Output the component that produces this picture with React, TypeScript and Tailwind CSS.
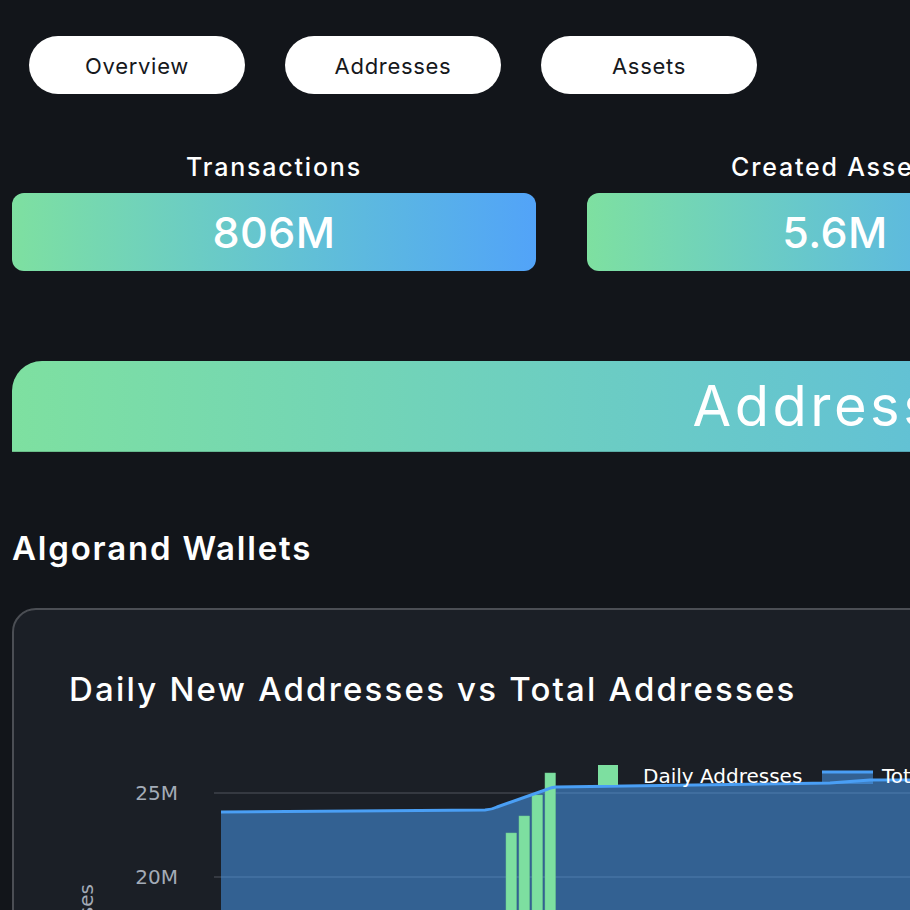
import React from "react";

const tabs = ["Overview", "Addresses", "Assets"];

const stats = [
  { label: "Transactions", value: "806M", w: "w-[524px]" },
  { label: "Created Assets", value: "5.6M", w: "w-[496px]" },
  { label: "Accounts", value: "31M", w: "w-[524px]" },
];

// offsets: page coords minus svg origin (14, 720)
const ox = 14;
const oy = 720;
const p = (x: number, y: number) => `${x - ox},${y - oy}`;

const bars = [
  { x: 506, top: 833 },
  { x: 519, top: 816 },
  { x: 532, top: 795 },
  { x: 545, top: 773 },
];

function WalletChart() {
  const line = `M${p(221, 812)} L${p(485, 810)} Q${p(492, 809.5)} ${p(497, 807)} L${p(548, 789)} Q${p(551, 787.5)} ${p(556, 787)} L${p(830, 783)} L${p(870, 780)} L${p(1640, 774)}`;
  const area = `${line} L${p(1640, 1200)} L${p(221, 1200)} Z`;
  return (
    <svg width="1640" height="420" className="block" style={{ fontFamily: '"DejaVu Sans", Verdana, sans-serif' }}>
      {/* grid */}
      <line x1={214 - ox} x2={1640} y1={793 - oy} y2={793 - oy} stroke="#50555d" strokeWidth="1" />
      <line x1={214 - ox} x2={1640} y1={877 - oy} y2={877 - oy} stroke="#50555d" strokeWidth="1" />
      <text x={178 - ox} y={800 - oy} textAnchor="end" fontSize="20" fill="#a3abb7">25M</text>
      <text x={178 - ox} y={884 - oy} textAnchor="end" fontSize="20" fill="#a3abb7">20M</text>
      <text transform={`translate(${93 - ox},${884 - oy}) rotate(-90)`} textAnchor="end" fontSize="20" fill="#a3abb7">
        Total Addresses
      </text>
      {/* total addresses area */}
      <path d={area} fill="#4a9ff5" fillOpacity="0.52" />
      {bars.map((b) => (
        <rect key={b.x} x={b.x - ox} y={b.top - oy} width="10.5" height={400} fill="#7ddfa0" stroke="#6cc98e" strokeWidth="0.5" />
      ))}
      <path d={line} fill="none" stroke="#4a9ff5" strokeWidth="3" strokeLinejoin="round" />
      {/* legend */}
      <rect x={598 - ox} y={765 - oy} width="20" height="20" fill="#7ddfa0" />
      <text x={643 - ox} y={783 - oy} fontSize="20" fill="#ffffff">Daily Addresses</text>
      <rect x={822 - ox} y={771 - oy} width="51" height="13" fill="#4a9ff5" fillOpacity="0.52" />
      <line x1={822 - ox} x2={873 - ox} y1={772 - oy} y2={772 - oy} stroke="#4a9ff5" strokeWidth="3" />
      <text x={882 - ox} y={783 - oy} fontSize="20" fill="#ffffff">Total Addresses</text>
    </svg>
  );
}

export default function App() {
  return (
    <div className="w-full min-h-screen overflow-hidden bg-[#12151a]" style={{ fontFamily: "Inter, 'Noto Sans', sans-serif" }}>
      <div className="w-[1698px] px-3 pt-9 pb-10 text-white">
        {/* Tabs */}
        <div className="flex gap-10 pl-[17px]">
          {tabs.map((t) => (
            <button
              key={t}
              type="button"
              className="w-[216px] h-[58px] rounded-full bg-white text-[22px] leading-none pt-px tracking-[0.7px] text-[#16181c]"
            >
              {t}
            </button>
          ))}
        </div>

        {/* Stats */}
        <div className="mt-[57px] flex gap-[51px]">
          {stats.map((s) => (
            <div key={s.label} className={`${s.w} shrink-0 flex flex-col items-center`}>
              <div className="h-8 leading-8 text-[25px] font-medium tracking-[1.8px]">{s.label}</div>
              <div className="mt-[10px] w-full h-[78px] rounded-xl bg-linear-to-r from-[#7ee0a0] to-[#52a3f8] flex items-center justify-center">
                <span className="text-[43px] font-medium tracking-[0.5px]">{s.value}</span>
              </div>
            </div>
          ))}
        </div>

        {/* Section banner */}
        <div className="mt-[90px] h-[91px] rounded-t-[30px] bg-linear-to-r from-[#7ee0a0] to-[#52a3f8] border-b border-black/15 flex items-center justify-center">
          <span className="text-[56px] tracking-[3.5px] leading-none">Addresses</span>
        </div>

        <h2 className="mt-[76px] h-10 leading-10 text-[33px] font-semibold tracking-[1.8px]">Algorand Wallets</h2>

        {/* Chart card */}
        <div className="mt-10 rounded-[24px] border-2 border-[#4b4e54] bg-[#1b1f26] pb-10">
          <h3 className="pt-[59px] pl-[55px] h-[99px] leading-10 text-[33px] font-medium tracking-[2.2px]">
            Daily New Addresses vs Total Addresses
          </h3>
          <div className="mt-[11px]">
            <WalletChart />
          </div>
        </div>
      </div>
    </div>
  );
}
